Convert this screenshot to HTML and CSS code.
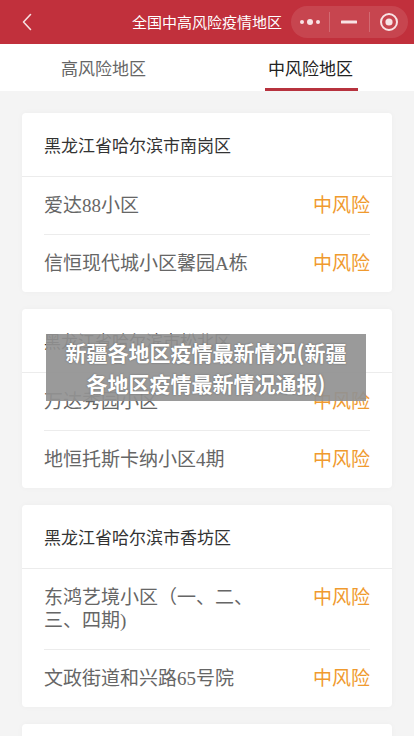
FILE: index.html
```html
<!DOCTYPE html>
<html lang="zh-CN">
<head>
<meta charset="utf-8">
<meta name="viewport" content="width=device-width, initial-scale=1">
<title>全国中高风险疫情地区</title>
<link rel="stylesheet" href="styles.css">
</head>
<body>
<header class="navbar">
  <div class="nav-back">
    <svg width="12" height="18" viewBox="0 0 12 18"><path d="M9.5 1.5 L2.5 9 L9.5 16.5" fill="none" stroke="#f6dfe1" stroke-width="1.6" stroke-linecap="round" stroke-linejoin="round"/></svg>
  </div>
  <div class="nav-title">全国中高风险疫情地区</div>
  <div class="capsule">
    <div class="cap-btn">
      <svg width="22" height="8" viewBox="0 0 22 8"><circle cx="3" cy="4" r="2" fill="#f8e3e5"/><circle cx="11" cy="4" r="3" fill="#f8e3e5"/><circle cx="19" cy="4" r="2" fill="#f8e3e5"/></svg>
    </div>
    <div class="cap-sep"></div>
    <div class="cap-btn">
      <svg width="16" height="4" viewBox="0 0 16 4"><rect x="0" y="0.5" width="16" height="3" rx="0.5" fill="#f8e3e5"/></svg>
    </div>
    <div class="cap-sep"></div>
    <div class="cap-btn">
      <svg width="20" height="20" viewBox="0 0 20 20"><circle cx="10" cy="10" r="8" fill="none" stroke="#f8e3e5" stroke-width="2"/><circle cx="10" cy="10" r="3.6" fill="#f8e3e5"/></svg>
    </div>
  </div>
</header>

<nav class="tabs">
  <div class="tab">高风险地区</div>
  <div class="tab tab-active"><span class="tab-label">中风险地区</span></div>
</nav>

<main class="list">
  <section class="card">
    <div class="card-head">黑龙江省哈尔滨市南岗区</div>
    <div class="row"><span class="row-name">爱达88小区</span><span class="row-level">中风险</span></div>
    <div class="row"><span class="row-name">信恒现代城小区馨园A栋</span><span class="row-level">中风险</span></div>
  </section>
  <section class="card">
    <div class="card-head">黑龙江省哈尔滨市松北区</div>
    <div class="row"><span class="row-name">万达秀园小区</span><span class="row-level">中风险</span></div>
    <div class="row"><span class="row-name">地恒托斯卡纳小区4期</span><span class="row-level">中风险</span></div>
  </section>
  <section class="card">
    <div class="card-head">黑龙江省哈尔滨市香坊区</div>
    <div class="row"><span class="row-name">东鸿艺境小区（一、二、三、四期)</span><span class="row-level">中风险</span></div>
    <div class="row"><span class="row-name">文政街道和兴路65号院</span><span class="row-level">中风险</span></div>
  </section>
  <section class="card">
    <div class="card-head">黑龙江省哈尔滨市道里区</div>
    <div class="row"><span class="row-name">群力家园小区</span><span class="row-level">中风险</span></div>
  </section>
</main>

<div class="banner">新疆各地区疫情最新情况(新疆<br>各地区疫情最新情况通报)</div>
</body>
</html>
```
FILE: styles.css
```css
* { box-sizing: border-box; }
html, body { margin: 0; padding: 0; }
body {
  background: #f4f4f4;
  font-family: "Noto Sans CJK SC", "Noto Sans", sans-serif;
  width: 414px;
  position: relative;
}
.navbar {
  height: 44px;
  background: #c1303c;
  display: flex;
  align-items: center;
  position: relative;
}
.nav-back {
  width: 60px;
  padding-left: 21px;
  display: flex;
  align-items: center;
  height: 44px;
}
.nav-title {
  position: absolute;
  left: 0; right: 0; top: 0;
  height: 44px;
  line-height: 44px;
  text-align: center;
  color: #fff;
  font-size: 15px;
  pointer-events: none;
}
.capsule {
  margin-left: auto;
  margin-right: 6px;
  width: 117px;
  height: 32px;
  border-radius: 16px;
  background: rgba(255,255,255,0.1);
  display: flex;
  align-items: center;
  position: relative;
  z-index: 1;
}
.cap-btn {
  flex: 1;
  display: flex;
  align-items: center;
  justify-content: center;
  height: 100%;
}
.cap-sep {
  width: 1px;
  height: 20px;
  background: rgba(255,255,255,0.2);
}
.tabs {
  height: 47px;
  background: #fff;
  display: flex;
}
.tab {
  flex: 1;
  display: flex;
  justify-content: center;
  align-items: center;
  font-size: 17px;
  color: #666;
  padding-bottom: 1px;
}
.tab-active { color: #222; position: relative; }
.tab-active::after {
  content: "";
  position: absolute;
  bottom: 0;
  left: 50%;
  width: 93px;
  margin-left: -46px;
  height: 3px;
  background: #b7323e;
}
.list {
  padding: 22px 22px 0;
  display: flex;
  flex-direction: column;
  gap: 17px;
}
.card {
  background: #fff;
  border-radius: 4px;
  box-shadow: 0 0 6px rgba(0,0,0,0.03);
}
.card-head {
  padding: 20px 22px 20px;
  line-height: 23px;
  font-size: 17px;
  color: #333;
  border-bottom: 1px solid #ececec;
}
.row {
  margin: 0 22px;
  padding: 17px 0;
  display: flex;
  justify-content: space-between;
  align-items: flex-start;
  border-top: 1px solid #ececec;
  line-height: 23px;
  font-size: 19px;
  font-family: "Liberation Serif", "Noto Sans CJK SC", serif;
}
.row:nth-child(2) { border-top: none; }
.row-name {
  color: #666;
  max-width: 222px;
}
.row-level {
  color: #f09a2e;
  white-space: nowrap;
}
.banner {
  position: absolute;
  left: 46px;
  top: 334px;
  width: 320px;
  height: 67px;
  background: rgba(146,146,146,0.93);
  color: #fff;
  font-weight: bold;
  font-size: 21px;
  line-height: 31px;
  text-align: center;
  padding-top: 3px;
  text-shadow: 0 0 2px rgba(0,0,0,0.35);
  font-family: "Noto Sans CJK SC", sans-serif;
}
```
